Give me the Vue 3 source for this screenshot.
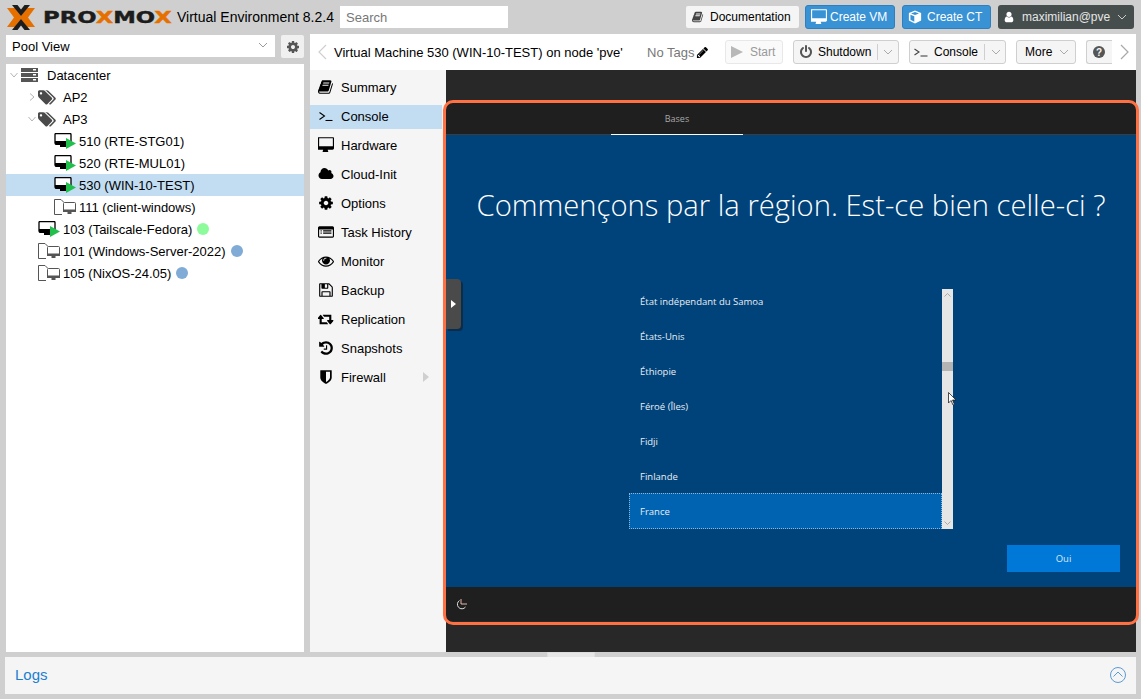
<script setup>
const icons = {
  book: { box: '0 0 1792 1792', d: 'M1639 478q40 57 18 129l-275 906q-19 64-76.500 107.500t-122.500 43.500h-923q-77 0-148.500-53.500t-99.500-131.500q-24-67-2-127 0-4 3-27t4-37q1-8-3-21.500t-3-19.500q2-11 8-21t16.500-23.500 16.500-23.500q23-38 45-91.500t30-91.500q3-10 .5-30t-.5-28q3-11 17-28t17-23q21-36 42-92t25-90q1-9-2.500-32t.5-28q4-13 22-30.500t22-22.500q19-26 42.500-84.500t27.500-96.500q1-8-3-25.500t-2-26.500q2-8 9-18t18-23 17-21q8-12 16.500-30.500t15-35 16-36 19.500-32 26.500-23.500 36-11.500 47.500 5.500l-1 3q38-9 51-9h761q74 0 114 56t18 130l-274 906q-36 119-71.500 153.500t-128.500 34.500h-869q-27 0-38 15-11 16-1 43 24 70 144 70h923q29 0 56-15.500t35-41.500l300-987q7-22 5-57 38 15 59 43zm-1064 2q-4 13 2 22.500t20 9.500h608q13 0 25.500-9.500t16.500-22.500l21-64q4-13-2-22.500t-20-9.500h-608q-13 0-25.500 9.500t-16.500 22.500zm-83 256q-4 13 2 22.500t20 9.500h608q13 0 25.500-9.500t16.500-22.500l21-64q4-13-2-22.500t-20-9.500h-608q-13 0-25.500 9.500t-16.500 22.500z' },
  desktop: { box: '0 0 1792 1792', d: 'M1664 1008v-832q0-13-9.500-22.500t-22.500-9.500h-1472q-13 0-22.500 9.500t-9.500 22.500v832q0 13 9.500 22.500t22.500 9.500h1472q13 0 22.500-9.500t9.500-22.500zm128-832v1088q0 66-47 113t-113 47h-544q0 37 16 77.500t32 71 16 43.500q0 26-19 45t-45 19h-512q-26 0-45-19t-19-45q0-14 16-44t32-70 16-78h-544q-66 0-113-47t-47-113v-1088q0-66 47-113t113-47h1632q66 0 113 47t47 113z' },
  cloud: { box: '0 0 2048 1792', d: 'M1984 1152q0 159-112.500 271.500t-271.500 112.500h-1088q-185 0-316.500-131.500t-131.500-316.500q0-132 71-241.500t187-163.500q-2-28-2-43 0-212 150-362t362-150q158 0 286.500 88t187.500 230q70-62 166-62 106 0 181 75t75 181q0 75-41 138 129 30 213 134.500t84 239.500z' },
  cog: { box: '0 0 1792 1792', d: 'M1152 896q0-106-75-181t-181-75-181 75-75 181 75 181 181 75 181-75 75-181zm512-109v222q0 12-8 23t-20 13l-185 28q-19 54-39 91 35 50 107 138 10 12 10 25t-9 23q-27 37-99 108t-94 71q-12 0-26-9l-138-108q-44 23-91 38-16 136-29 186-7 28-36 28h-222q-14 0-24.500-8.500t-11.500-21.500l-28-184q-49-16-90-37l-141 107q-10 9-25 9-14 0-25-11-126-114-165-168-7-10-7-23 0-12 8-23 15-21 51-66.500t54-70.500q-27-50-41-99l-183-27q-13-2-21-12.500t-8-23.500v-222q0-12 8-23t19-13l186-28q14-46 39-92-40-57-107-138-10-12-10-24 0-10 9-23 26-36 98.500-107.500t94.500-71.500q13 0 26 10l138 107q44-23 91-38 16-136 29-186 7-28 36-28h222q14 0 24.500 8.500t11.500 21.500l28 184q49 16 90 37l142-107q9-9 24-9 13 0 25 10 129 119 165 170 7 8 7 22 0 12-8 23-15 21-51 66.500t-54 70.500q26 50 41 98l183 28q13 2 21 12.500t8 23.500z' },
  list: { box: '0 0 1792 1792', d: 'M160 256h1472q66 0 113 47t47 113v960q0 66-47 113t-113 47h-1472q-66 0-113-47t-47-113v-960q0-66 47-113t113-47zm-32 352v768q0 13 9.500 22.500t22.500 9.500h1472q13 0 22.500-9.500t9.500-22.500v-768zm160 96h128v128h-128zm288 0h928v128h-928zm-288 256h128v128h-128zm288 0h928v128h-928z' },
  eye: { box: '0 0 1792 1792', d: 'M1664 960q-152-236-381-353 61 104 61 225 0 185-131.500 316.500t-316.500 131.500-316.500-131.500-131.500-316.500q0-121 61-225-229 117-381 353 133 205 333.500 326.500t434.500 121.500 434.500-121.500 333.500-326.500zm-720-384q0-20-14-34t-34-14q-125 0-214.500 89.500t-89.500 214.500q0 20 14 34t34 14 34-14 14-34q0-86 61-147t147-61q20 0 34-14t14-34zm848 384q0 34-20 69-140 230-376.500 368.500t-499.500 138.500-499.500-139-376.500-368q-20-35-20-69t20-69q140-229 376.500-368t499.500-139 499.500 139 376.500 368q20 35 20 69z' },
  floppy: { box: '0 0 1792 1792', d: 'M512 1536h768v-384h-768v384zm896 0h128v-896q0-14-10-38.500t-20-34.500l-281-281q-10-10-34-20t-39-10v416q0 40-28 68t-68 28h-576q-40 0-68-28t-28-68v-416h-128v1280h128v-416q0-40 28-68t68-28h832q40 0 68 28t28 68v416zm-384-928v-320q0-13-9.500-22.500t-22.500-9.500h-192q-13 0-22.500 9.500t-9.500 22.500v320q0 13 9.500 22.500t22.500 9.500h192q13 0 22.500-9.500t9.500-22.500zm640 32v928q0 40-28 68t-68 28h-1344q-40 0-68-28t-28-68v-1344q0-40 28-68t68-28h928q40 0 88 20t76 48l280 280q28 28 48 76t20 88z' },
  retweet: { box: '0 0 1920 1792', d: 'M1216 1504q0 13-9.500 22.500t-22.500 9.500h-960q-8 0-13.500-2t-9-7-5.500-8-3-11.500-1-11.500v-600h-192q-26 0-45-19t-19-45q0-24 15-41l320-384q19-22 49-22t49 22l320 384q15 17 15 41 0 26-19 45t-45 19h-192v384h576q16 0 25 11l160 192q7 10 7 21zm640-416q0 24-15 41l-320 384q-20 23-49 23t-49-23l-320-384q-15-17-15-41 0-26 19-45t45-19h192v-384h-576q-16 0-25-12l-160-192q-7-9-7-20 0-13 9.500-22.500t22.500-9.500h960q8 0 13.500 2t9 7 5.500 8 3 11.500 1 11.500v600h192q26 0 45 19t19 45z' },
  history: { box: '0 0 1792 1792', d: 'M1664 896q0 156-61 298t-164 245-245 164-298 61q-172 0-327-72.500t-264-204.500q-7-10-6.500-22.500t8.500-20.500l137-138q10-9 25-9 16 2 23 12 73 95 179 147t225 52q104 0 198.500-40.500t163.500-109.500 109.500-163.500 40.500-198.500-40.500-198.500-109.500-163.500-163.500-109.500-198.500-40.500q-98 0-188 35.500t-160 101.500l137 138q31 30 14 69-17 40-59 40h-448q-26 0-45-19t-19-45v-448q0-42 40-59 39-17 69 14l130 129q107-101 244.500-156.500t284.500-55.500q156 0 298 61t245 164 164 245 61 298zm-640-288v448q0 14-9 23t-23 9h-320q-14 0-23-9t-9-23v-64q0-14 9-23t23-9h224v-352q0-14 9-23t23-9h64q14 0 23 9t9 23z' },
  shield: { box: '0 0 1792 1792', d: 'M1344 960v-640h-448v1137q119-63 213-137 235-184 235-360zm192-768v768q0 86-33.500 170.500t-83 150-118 127.500-126.500 103-121 77.500-89.500 49.500-42.500 20q-12 6-26 6t-26-6q-16-7-42.500-20t-89.500-49.500-121-77.500-126.500-103-118-127.500-83-150-33.500-170.500v-768q0-26 19-45t45-19h1152q26 0 45 19t19 45z' },
  user: { box: '0 0 1792 1792', d: 'M1536 1399q0 109-62.500 187t-150.500 78h-854q-88 0-150.500-78t-62.500-187q0-85 8.500-160.500t31.500-152 58.500-131 94-89 134.500-34.500q131 128 313 128t313-128q76 0 134.500 34.500t94 89 58.500 131 31.500 152 8.500 160.500zm-256-887q0 159-112.500 271.500t-271.500 112.500-271.500-112.500-112.500-271.500 112.500-271.500 271.500-112.500 271.500 112.500 112.500 271.500z' },
  power: { box: '0 0 1792 1792', d: 'M1664 896q0 156-61 298t-164 245-245 164-298 61-298-61-245-164-164-245-61-298q0-182 80.500-343t226.500-270q43-32 95.500-25t83.500 50q32 42 24.500 94.500t-49.500 84.500q-98 74-151.500 181t-53.500 228q0 104 40.500 198.500t109.500 163.500 163.500 109.500 198.500 40.500 198.500-40.500 163.500-109.500 109.500-163.500 40.500-198.500q0-121-53.500-228t-151.500-181q-42-32-49.500-84.500t24.500-94.500q31-43 84-50t95 25q146 109 226.500 270t80.500 343zm-640-768v640q0 52-38 90t-90 38-90-38-38-90v-640q0-52 38-90t90-38 90 38 38 90z' },
  tags: { box: '0 0 1920 1792', d: 'M448 448q0-53-37.500-90.500t-90.500-37.500-90.500 37.500-37.500 90.500 37.500 90.500 90.500 37.500 90.500-37.500 37.500-90.500zm1067 576q0 53-37 90l-491 492q-39 37-91 37-53 0-90-37l-715-716q-38-37-64.500-101t-26.500-117v-416q0-52 38-90t90-38h416q53 0 117 26.500t102 64.500l715 714q37 39 37 91zm384 0q0 53-37 90l-491 492q-39 37-91 37-36 0-59-14t-53-45l470-470q37-37 37-90 0-52-37-91l-715-714q-38-38-102-64.500t-117-26.500h224q53 0 117 26.500t102 64.500l715 714q37 39 37 91z' },
  pencil: { box: '0 0 1792 1792', d: 'M491 1536l91-91-235-235-91 91v107h128v128h107zm523-928q0-22-22-22-10 0-17 7l-542 542q-7 7-7 17 0 22 22 22 10 0 17-7l542-542q7-7 7-17zm-54-192l416 416-832 832h-416v-416zm683 96q0 53-37 90l-166 166-416-416 166-165q36-38 90-38 53 0 91 38l235 234q37 39 37 91z' }
}

const menu = [
  { label: 'Summary', icon: 'book' },
  { label: 'Console', term: true, active: true },
  { label: 'Hardware', icon: 'desktop' },
  { label: 'Cloud-Init', icon: 'cloud' },
  { label: 'Options', icon: 'cog' },
  { label: 'Task History', icon: 'list' },
  { label: 'Monitor', icon: 'eye' },
  { label: 'Backup', icon: 'floppy' },
  { label: 'Replication', icon: 'retweet' },
  { label: 'Snapshots', icon: 'history' },
  { label: 'Firewall', icon: 'shield', sub: true }
]

const tree = [
  { label: 'Datacenter', type: 'dc', depth: 0, arrow: 'down' },
  { label: 'AP2', type: 'tags', depth: 1, arrow: 'right' },
  { label: 'AP3', type: 'tags', depth: 1, arrow: 'down' },
  { label: '510 (RTE-STG01)', type: 'vm', depth: 2 },
  { label: '520 (RTE-MUL01)', type: 'vm', depth: 2 },
  { label: '530 (WIN-10-TEST)', type: 'vm', depth: 2, selected: true },
  { label: '111 (client-windows)', type: 'tpl', depth: 2 },
  { label: '103 (Tailscale-Fedora)', type: 'vm', depth: 1, dot: '#8dfb9b' },
  { label: '101 (Windows-Server-2022)', type: 'tpl', depth: 1, dot: '#7fabd6' },
  { label: '105 (NixOS-24.05)', type: 'tpl', depth: 1, dot: '#7fabd6' }
]

const regions = ['État indépendant du Samoa', 'États-Unis', 'Éthiopie', 'Féroé (Îles)', 'Fidji', 'Finlande', 'France']
</script>

<template>
  <div class="page">
    <header class="topbar">
      <svg class="logo-x" viewBox="0 0 28 25" width="28" height="25">
        <polygon points="0,3 8,3 15.500,12.500 8,22 0,22 7,12.500" fill="#e57000" />
        <polygon points="28,3 20,3 12.500,12.500 20,22 28,22 21,12.500" fill="#e57000" />
        <polygon points="5,0 10.500,0 14,4.500 17.500,0 23,0 14,11" fill="#1c1c1c" />
        <polygon points="5,25 10.500,25 14,20.500 17.500,25 23,25 14,14" fill="#1c1c1c" />
      </svg>
      <div class="logo-text"><div class="logo-word">PRO<span>X</span>MO<span>X</span></div></div>
      <div class="version">Virtual Environment 8.2.4</div>
      <div class="search">Search</div>
      <div class="spacer"></div>
      <div class="doc-btn">
        <svg class="i12" :viewBox="icons.book.box"><path :d="icons.book.d" fill="#444" /></svg>
        Documentation
      </div>
      <div class="blue-btn vm-btn">
        <svg class="i16" :viewBox="icons.desktop.box"><path :d="icons.desktop.d" fill="#fff" /></svg>
        Create VM
      </div>
      <div class="blue-btn ct-btn">
        <svg class="i14" viewBox="0 0 16 16"><path d="M8 0.500 15 3.500 15 12 8 15.500 1 12 1 3.500Z M8 2.200 3.500 4 8 5.800 12.500 4Z M2.800 5.300 2.800 11 7.200 13.300 7.200 7.200Z" fill="#fff" fill-rule="evenodd" /></svg>
        Create CT
      </div>
      <div class="user-btn">
        <svg class="i12" :viewBox="icons.user.box"><path :d="icons.user.d" fill="#fff" /></svg>
        maximilian@pve
        <svg class="chev" viewBox="0 0 10 6"><path d="M1 1 5 5 9 1" fill="none" stroke="#c8cccc" /></svg>
      </div>
    </header>

    <div class="columns">
      <aside class="left">
        <div class="left-head">
          <div class="combo">
            Pool View
            <svg class="chev combo-chev" viewBox="0 0 10 6"><path d="M1 1 5 5 9 1" fill="none" stroke="#9a9a9a" /></svg>
          </div>
          <div class="gear-btn">
            <svg class="i14" :viewBox="icons.cog.box"><path :d="icons.cog.d" fill="#555" /></svg>
          </div>
        </div>
        <div class="tree">
          <div v-for="n in tree" :key="n.label" class="tree-row" :class="[{ selected: n.selected }, 'd' + n.depth]">
            <span class="twist">
              <svg v-if="n.arrow === 'down'" viewBox="0 0 8 8" width="8" height="8"><path d="M0.500 2 4 6 7.500 2" fill="none" stroke="#b4b4b4" /></svg>
              <svg v-if="n.arrow === 'right'" viewBox="0 0 8 8" width="8" height="8"><path d="M2 0.500 6 4 2 7.500" fill="none" stroke="#b4b4b4" /></svg>
            </span>
            <svg v-if="n.type === 'dc'" class="t-dc" viewBox="0 0 17 14" width="17" height="14">
              <g fill="#555">
                <rect x="0" y="0" width="17" height="4" />
                <rect x="0" y="5" width="17" height="4" />
                <rect x="0" y="10" width="17" height="4" />
              </g>
              <g fill="#fff">
                <rect x="12" y="1" width="3" height="1.500" />
                <rect x="12" y="6" width="3" height="1.500" />
                <rect x="12" y="11" width="3" height="1.500" />
              </g>
            </svg>
            <svg v-else-if="n.type === 'tags'" class="t-tags" :viewBox="icons.tags.box" width="18" height="17"><path :d="icons.tags.d" fill="#4a4a4a" /></svg>
            <svg v-else-if="n.type === 'vm'" class="t-vm" viewBox="0 0 22 16" width="22" height="16">
              <path d="M1 1.500Q1 .5 2 .5H16Q17 .5 17 1.500V10Q17 11 16 11H2Q1 11 1 10Z" fill="#fff" stroke="#000" stroke-width="1.300" />
              <path d="M1 8H17V10.500Q17 12 15.500 12H2.500Q1 12 1 10.500Z" fill="#000" />
              <rect x="6" y="12" width="6" height="2" fill="#000" />
              <path d="M12 5 22 10.500 12 16Z" fill="#21bf4b" />
            </svg>
            <svg v-else class="t-tpl" viewBox="0 0 22 16" width="22" height="16">
              <path d="M.5 15.500V.5H7L10 3.500" fill="none" stroke="#555" />
              <path d="M.5 15.500H8" fill="none" stroke="#555" />
              <rect x="9.500" y="3.500" width="12" height="9" rx="1" fill="#fff" stroke="#555" />
              <rect x="9" y="10.500" width="13" height="2.500" fill="#555" />
              <rect x="13.500" y="13" width="4" height="2" fill="#555" />
            </svg>
            <span class="t-label">{{ n.label }}</span>
            <span v-if="n.dot" class="dot" :style="{ background: n.dot }"></span>
          </div>
        </div>
      </aside>

      <main class="right">
        <div class="toolbar">
          <svg class="nav-arrow" viewBox="0 0 9 16"><path d="M8 1 1 8 8 15" fill="none" stroke="#d0d0d0" stroke-width="1.200" /></svg>
          <div class="vm-title">Virtual Machine 530 (WIN-10-TEST) on node 'pve'</div>
          <div class="no-tags">No Tags</div>
          <svg class="pencil" :viewBox="icons.pencil.box"><path :d="icons.pencil.d" fill="#000" /></svg>
          <div class="tb-btn start-btn">
            <svg width="12" height="12" viewBox="0 0 12 12"><path d="M0 0 12 6 0 12Z" fill="#b8b8b8" /></svg>
            <span>Start</span>
          </div>
          <div class="tb-btn shutdown-btn">
            <svg class="i14" :viewBox="icons.power.box"><path :d="icons.power.d" fill="#555" /></svg>
            <span>Shutdown</span>
            <i class="sep"></i>
            <svg class="chev" viewBox="0 0 10 6"><path d="M1 1 5 5 9 1" fill="none" stroke="#aaa" /></svg>
          </div>
          <div class="tb-btn console-btn">
            <svg width="14" height="10" viewBox="0 0 14 10"><path d="M.5 2 5 5 .5 8" fill="none" stroke="#444" stroke-width="1.100" /><path d="M6.500 9H13.500" stroke="#444" stroke-width="1.100" /></svg>
            <span>Console</span>
            <i class="sep"></i>
            <svg class="chev" viewBox="0 0 10 6"><path d="M1 1 5 5 9 1" fill="none" stroke="#aaa" /></svg>
          </div>
          <div class="tb-btn more-btn">
            <span>More</span>
            <svg class="chev" viewBox="0 0 10 6"><path d="M1 1 5 5 9 1" fill="none" stroke="#aaa" /></svg>
          </div>
          <div class="tb-btn help-btn"><span class="help-ic">?</span></div>
          <svg class="nav-arrow next" viewBox="0 0 9 16"><path d="M1 1 8 8 1 15" fill="none" stroke="#a8a8a8" stroke-width="1.200" /></svg>
        </div>

        <div class="work">
          <nav class="menu">
            <div v-for="m in menu" :key="m.label" class="menu-item" :class="{ active: m.active }">
              <span class="m-icon">
                <svg v-if="m.term" width="14" height="10" viewBox="0 0 14 10"><path d="M.5 1.500 5.500 5 .5 8.500" fill="none" stroke="#000" stroke-width="1.100" /><path d="M6.500 9.500H13.500" stroke="#000" stroke-width="1.100" /></svg>
                <svg v-else class="i16" :viewBox="icons[m.icon].box"><path :d="icons[m.icon].d" fill="#000" /></svg>
              </span>
              {{ m.label }}
              <svg v-if="m.sub" class="m-sub" width="6" height="10" viewBox="0 0 6 10"><path d="M0 0 6 5 0 10Z" fill="#cfcfcf" /></svg>
            </div>
          </nav>

          <section class="console">
            <div class="screen">
              <div class="win-top"><div class="win-tab">Bases</div></div>
              <div class="win-main">
                <div class="win-title">Commençons par la région. Est-ce bien celle-ci ?</div>
                <div class="listbox">
                  <div class="list-rows">
                    <div v-for="r in regions" :key="r" class="list-row" :class="{ current: r === 'France' }">{{ r }}</div>
                  </div>
                  <div class="scroll">
                    <svg class="sc-arrow" viewBox="0 0 7 4"><path d="M.5 3.500 3.500 .5 6.500 3.500" fill="none" stroke="#999" stroke-width=".8" /></svg>
                    <div class="sc-thumb"></div>
                    <svg class="sc-arrow" viewBox="0 0 7 4"><path d="M.5 .5 3.500 3.500 6.500 .5" fill="none" stroke="#999" stroke-width=".8" /></svg>
                  </div>
                </div>
                <div class="win-actions"><div class="win-btn">Oui</div></div>
              </div>
              <div class="win-foot">
                <svg width="12" height="12" viewBox="0 0 12 12"><path d="M3.500 2.500A4.500 4.500 0 1 0 9.500 9" fill="none" stroke="#ddd" /><path d="M5 1V6H11" fill="none" stroke="#e8b8a8" /></svg>
              </div>
            </div>
            <div class="drawer-tab">
              <svg width="5" height="8" viewBox="0 0 5 8"><path d="M0 0 5 4 0 8Z" fill="#fff" /></svg>
            </div>
            <svg class="cursor" width="9" height="14" viewBox="0 0 9 14"><path d="M.5 .5V11L3 8.500 5 13 6.500 12.500 4.500 8H8Z" fill="#fff" stroke="#222" stroke-width=".8" /></svg>
            <div class="highlight"></div>
          </section>
        </div>
      </main>
    </div>

    <footer class="logs">
      <span>Logs</span>
      <svg class="logs-toggle" width="16" height="16" viewBox="0 0 16 16"><circle cx="8" cy="8" r="7.500" fill="none" stroke="#5b9bd5" /><path d="M3.500 9.500 8 5 12.500 9.500" fill="none" stroke="#5b9bd5" /></svg>
      <div class="splitter"></div>
    </footer>
  </div>
</template>

<style>
html, body { margin: 0; background: #cfcfcf; }
</style>

<style scoped>
.page {
  position: relative;
  display: flex;
  flex-direction: column;
  width: 1141px;
  height: 699px;
  overflow: hidden;
  background: #cfcfcf;
  font-family: "Liberation Sans", Arial, sans-serif;
  font-size: 13px;
  color: #000;
}
.i12 { width: 12px; height: 12px; flex: none; }
.i14 { width: 14px; height: 14px; flex: none; }
.i16 { width: 16px; height: 16px; flex: none; }
.chev { width: 10px; height: 6px; flex: none; }

.topbar {
  display: flex;
  align-items: center;
  height: 34px;
  flex: none;
  padding-left: 7px;
}
.logo-x { flex: none; margin-right: 8px; }
.logo-text {
  width: 134px;
  flex: none;
}
.logo-word {
  font-family: "DejaVu Sans", sans-serif;
  font-weight: 700;
  font-size: 16px;
  color: #1c1c1c;
  white-space: nowrap;
  transform: scaleX(1.42);
  transform-origin: left center;
  -webkit-text-stroke: 0.4px currentColor;
}
.logo-word span { color: #e57000; }
.version { width: 163px; flex: none; font-size: 14px; white-space: nowrap; }
.search {
  width: 162px;
  height: 22px;
  padding-left: 6px;
  line-height: 23px;
  background: #fff;
  color: #777;
  flex: none;
}
.spacer { flex: 1; }
.doc-btn {
  display: flex;
  align-items: center;
  gap: 6px;
  width: 113px;
  height: 22px;
  box-sizing: border-box;
  padding-left: 6px;
  margin-right: 6px;
  background: #f5f5f5;
  border-radius: 2px;
  font-size: 12px;
  flex: none;
}
.blue-btn {
  display: flex;
  align-items: center;
  height: 24px;
  box-sizing: border-box;
  padding-left: 5px;
  background: #3892d4;
  border: 1px solid #2e7fbf;
  border-radius: 3px;
  color: #fff;
  font-size: 12px;
  flex: none;
}
.vm-btn { width: 90px; gap: 3px; margin-right: 7px; }
.ct-btn { width: 89px; gap: 5px; margin-right: 7px; }
.user-btn {
  display: flex;
  align-items: center;
  gap: 7px;
  width: 136px;
  height: 24px;
  box-sizing: border-box;
  padding: 0 8px 0 5px;
  margin-right: 7px;
  background: #464d4d;
  border-radius: 3px;
  color: #e4e6e6;
  font-size: 12px;
  white-space: nowrap;
  flex: none;
}

.columns {
  display: flex;
  flex: 1;
  min-height: 0;
}
.left {
  display: flex;
  flex-direction: column;
  width: 298px;
  margin: 0 6px;
  flex: none;
}
.left-head {
  display: flex;
  justify-content: space-between;
  height: 23px;
  margin: 1px 0 6px;
}
.combo {
  position: relative;
  width: 269px;
  height: 22px;
  box-sizing: border-box;
  padding-left: 6px;
  line-height: 23px;
  background: #fff;
}
.combo-chev { position: absolute; right: 7px; top: 7px; }
.gear-btn {
  display: flex;
  align-items: center;
  justify-content: center;
  width: 23px;
  height: 23px;
  background: #f0f0f0;
  border-radius: 2px;
}
.tree {
  flex: 1;
  background: #fff;
}
.tree-row {
  display: flex;
  align-items: center;
  height: 22px;
  white-space: nowrap;
}
.tree-row.selected { background: #c2ddf2; }
.twist {
  display: flex;
  align-items: center;
  justify-content: center;
  width: 8px;
  flex: none;
}
.d0 { padding-left: 4px; }
.d0 .twist { margin-right: 3px; }
.d0 .t-label { margin-left: 9px; }
.d1 { padding-left: 22px; }
.d1 .twist { margin-right: 2px; }
.d1 .t-tags { margin-right: 7px; margin-left: 0; }
.d1 .t-vm, .d1 .t-tpl { margin-left: 0; margin-right: 3px; }
.d2 { padding-left: 38px; }
.d2 .twist { margin-right: 2px; }
.d2 .t-vm, .d2 .t-tpl { margin-right: 3px; }
.t-vm, .t-tpl, .t-dc, .t-tags { flex: none; }
.dot {
  width: 12px;
  height: 12px;
  margin-left: 5px;
  border-radius: 50%;
}

.right {
  display: flex;
  flex-direction: column;
  width: 826px;
  flex: none;
}
.toolbar {
  display: flex;
  align-items: center;
  height: 36px;
  flex: none;
  padding-left: 8px;
  background: #fff;
  white-space: nowrap;
}
.nav-arrow { width: 9px; height: 16px; flex: none; }
.next { margin-left: 8px; }
.vm-title { width: 313px; margin-left: 7px; flex: none; }
.no-tags { width: 49px; color: #777; flex: none; }
.pencil { width: 13px; height: 13px; flex: none; margin-right: 16px; }
.tb-btn {
  display: flex;
  align-items: center;
  height: 24px;
  box-sizing: border-box;
  margin-right: 10px;
  padding-left: 5px;
  background: #f5f5f5;
  border: 1px solid #cfcfcf;
  border-radius: 3px;
  font-size: 12px;
  flex: none;
}
.start-btn {
  width: 58px;
  gap: 7px;
  background: #fafafa;
  border-color: #e8e8e8;
  color: #999;
}
.shutdown-btn { width: 106px; gap: 5px; }
.console-btn { width: 97px; gap: 6px; padding-left: 4px; }
.shutdown-btn .sep { margin-left: 1px; }
.more-btn { width: 60px; gap: 7px; padding-left: 8px; }
.help-btn { width: 26px; margin-right: 0; border-right: 0; border-radius: 3px 0 0 3px; }
.help-ic {
  display: flex;
  align-items: center;
  justify-content: center;
  width: 12px;
  height: 12px;
  margin-left: 1px;
  border-radius: 50%;
  background: #555;
  color: #f5f5f5;
  font-size: 10px;
  font-weight: 700;
}
.sep {
  width: 1px;
  height: 16px;
  background: #cfcfcf;
}

.work {
  display: flex;
  flex: 1;
  min-height: 0;
  background: #fff;
}
.menu {
  display: flex;
  flex-direction: column;
  gap: 5px;
  width: 132px;
  padding-top: 6px;
  flex: none;
  box-sizing: content-box;
  background: #f5f5f5;
  border-right: 4px solid #f5f5f5;
}
.menu-item {
  position: relative;
  display: flex;
  align-items: center;
  height: 24px;
  width: 132px;
  padding-bottom: 2px;
  box-sizing: border-box;
  flex: none;
}
.menu-item.active { background: #c2ddf2; }
.m-icon {
  display: flex;
  align-items: center;
  justify-content: center;
  width: 31px;
  flex: none;
  padding-left: 1px;
  box-sizing: border-box;
}
.m-sub { position: absolute; right: 13px; top: 6px; }

.console {
  position: relative;
  flex: 1;
  background: #282828;
  padding-top: 33px;
  height: 582px;
  box-sizing: border-box;
}
.screen {
  display: flex;
  flex-direction: column;
  height: 518px;
}
.win-top {
  height: 32px;
  box-sizing: border-box;
  flex: none;
  background: #1f1f1f;
  border-bottom: 1px solid #3c3c3c;
}
.win-tab {
  width: 132px;
  height: 32px;
  margin-left: 165px;
  box-sizing: border-box;
  border-bottom: 1px solid #fff;
  line-height: 31px;
  text-align: center;
  font-family: "Open Sans", sans-serif;
  font-size: 9px;
  color: #a8a8a8;
}
.win-main {
  flex: 1;
  display: flex;
  flex-direction: column;
  align-items: center;
  background: #00427a;
  font-family: "Open Sans", sans-serif;
}
.win-title {
  margin-top: 50px;
  height: 40px;
  line-height: 40px;
  font-size: 29.200px;
  font-weight: 300;
  color: #fff;
  white-space: nowrap;
}
.listbox {
  display: flex;
  width: 324px;
  height: 240px;
  margin-top: 64px;
  flex: none;
}
.list-rows {
  width: 313px;
  overflow: hidden;
  flex: none;
}
.list-row {
  height: 35px;
  line-height: 35px;
  padding-left: 11px;
  font-size: 9.500px;
  color: #e8eef4;
  box-sizing: border-box;
}
.list-row:first-child { margin-top: -5px; }
.list-row.current {
  height: 36px;
  margin-top: -1px;
  line-height: 38px;
  background: #0063b1;
  outline: 1px dotted #8fb4d4;
  outline-offset: -1px;
}
.scroll {
  display: flex;
  flex-direction: column;
  align-items: center;
  justify-content: space-between;
  position: relative;
  width: 11px;
  padding: 4px 0;
  box-sizing: border-box;
  background: #e6e6e6;
}
.sc-arrow { width: 7px; height: 4px; }
.sc-thumb {
  position: absolute;
  left: 0;
  top: 73px;
  width: 11px;
  height: 9px;
  background: #b4b4b4;
}
.win-actions {
  align-self: stretch;
  display: flex;
  justify-content: flex-end;
  margin-top: 16px;
  padding-right: 16px;
}
.win-btn {
  width: 113px;
  height: 27px;
  line-height: 27px;
  text-align: center;
  background: #0078d7;
  font-size: 9.500px;
  color: #dbe9f6;
}
.win-foot {
  display: flex;
  align-items: center;
  height: 34px;
  flex: none;
  padding-left: 10px;
  background: #1f1f1f;
}
.drawer-tab {
  position: absolute;
  left: 0;
  top: 209px;
  display: flex;
  align-items: center;
  justify-content: center;
  width: 15px;
  height: 50px;
  background: #4a4a4a;
  border-radius: 0 4px 4px 0;
  box-shadow: 2px 2px 0 #0c2c4c;
}
.cursor { position: absolute; left: 502px; top: 322px; }
.highlight {
  position: absolute;
  left: -3px;
  top: 30px;
  width: 690px;
  height: 519px;
  border: 3px solid #ff7043;
  border-radius: 10px;
  pointer-events: none;
}

.logs {
  position: relative;
  display: flex;
  align-items: center;
  height: 37px;
  box-sizing: border-box;
  flex: none;
  margin: 5px;
  padding: 0 0 2px 10px;
  background: #f5f5f5;
  color: #1b7fd1;
  font-size: 15px;
}
.logs-toggle { position: absolute; left: 1105px; top: 10px; }
.splitter {
  position: absolute;
  left: 542px;
  top: -5px;
  width: 48px;
  height: 5px;
  box-sizing: border-box;
  background: #e6e6e6;
  border: 1px solid #ddd;
  border-bottom: 0;
}
</style>
